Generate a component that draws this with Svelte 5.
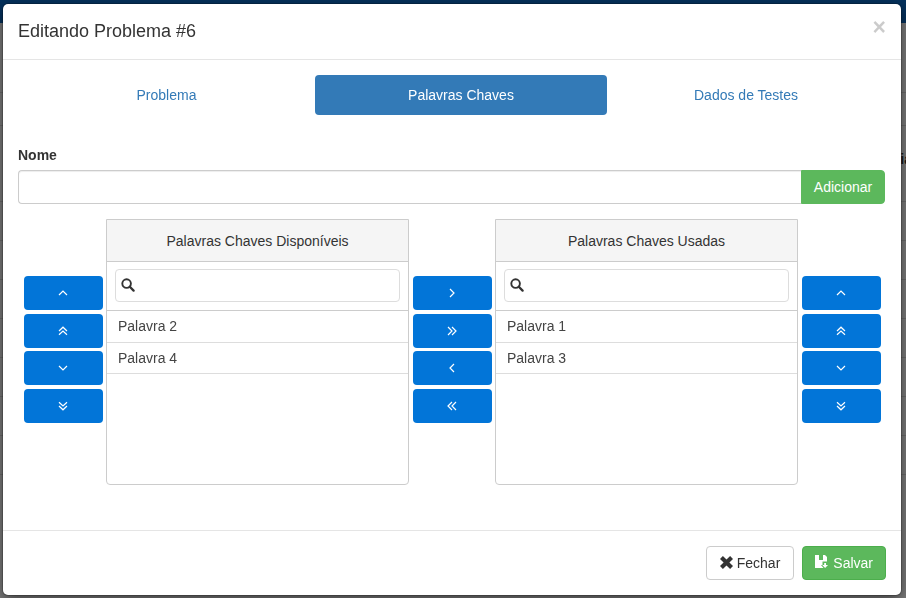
<script>
  const rowHeights = [70, 33, 53, 39, 39, 39, 39, 39, 39, 39];
  const chevrons = {
    up: ['M-4 2 L0 -2 L4 2'],
    dup: ['M-4 0 L0 -3.8 L4 0', 'M-4 3.8 L0 0 L4 3.8'],
    down: ['M-4 -2 L0 2 L4 -2'],
    ddown: ['M-4 -3.8 L0 0 L4 -3.8', 'M-4 0 L0 3.8 L4 0'],
    right: ['M-2 -4 L2 0 L-2 4'],
    dright: ['M-4 -4 L0 0 L-4 4', 'M0 -4 L4 0 L0 4'],
    left: ['M2 -4 L-2 0 L2 4'],
    dleft: ['M0 -4 L-4 0 L0 4', 'M4 -4 L0 0 L4 4']
  };
  const vertical = ['up', 'dup', 'down', 'ddown'];
  const horizontal = ['right', 'dright', 'left', 'dleft'];
  const lists = [
    { title: 'Palavras Chaves Disponíveis', items: ['Palavra 2', 'Palavra 4'] },
    { title: 'Palavras Chaves Usadas', items: ['Palavra 1', 'Palavra 3'] }
  ];
</script>

{#snippet stack(names, cls)}
  <div class="stack {cls}">
    {#each names as n}
      <button class="move" type="button" aria-label={n}>
        <svg width="14" height="14" viewBox="-7 -7 14 14">
          {#each chevrons[n] as d}
            <path {d} fill="none" stroke="#fff" stroke-width="1.2" />
          {/each}
        </svg>
      </button>
    {/each}
  </div>
{/snippet}

{#snippet panel(list)}
  <section class="panel">
    <header>{list.title}</header>
    <div class="search">
      <div class="searchbox">
        <svg width="14" height="14" viewBox="0 0 14 14">
          <circle cx="5.6" cy="5.6" r="4.3" fill="none" stroke="#333" stroke-width="1.9" />
          <path d="M8.8 8.8 L12.6 12.6" stroke="#333" stroke-width="2.3" stroke-linecap="round" />
        </svg>
      </div>
    </div>
    <ul>
      {#each list.items as item}
        <li>{item}</li>
      {/each}
    </ul>
  </section>
{/snippet}

<div class="page">
  <div class="nav"></div>
  {#each rowHeights as h, i}
    <div class="bgrow" style="height: {h}px">
      {#if i === 2}<b>ia</b>{/if}
    </div>
  {/each}
</div>

<div class="overlay"></div>

<div class="modal">
  <div class="mhead">
    <h4>Editando Problema #6</h4>
    <span class="close">×</span>
  </div>

  <div class="mbody">
    <nav class="pills">
      <a href="#p">Problema</a>
      <a href="#k" class="active">Palavras Chaves</a>
      <a href="#d">Dados de Testes</a>
    </nav>

    <label for="nome">Nome</label>
    <div class="group">
      <input id="nome" type="text" />
      <button class="add" type="button">Adicionar</button>
    </div>

    <div class="dual">
      {@render stack(vertical, 'c1')}
      {@render panel(lists[0])}
      {@render stack(horizontal, 'c2')}
      {@render panel(lists[1])}
      {@render stack(vertical, 'c3')}
    </div>
  </div>

  <div class="mfoot">
    <button class="btn plain" type="button">
      <svg width="15" height="15" viewBox="0 0 15 15">
        <path d="M1 3.9 L3.9 1 L7.5 4.6 L11.1 1 L14 3.9 L10.4 7.5 L14 11.1 L11.1 14 L7.5 10.4 L3.9 14 L1 11.1 L4.6 7.5 Z" fill="#333" />
      </svg>
      Fechar
    </button>
    <button class="btn ok" type="button">
      <svg width="14" height="14" viewBox="0 0 14 14">
        <path d="M0 0 H4 V5 H8 V0 H10 L12 2 V6.5 H7.5 V10 H6 L8.5 13 H0 Z" fill="#fff" />
        <path d="M9.2 8 H11 V10 H13 L10.1 13 L7.2 10 H9.2 Z" fill="#fff" />
      </svg>
      Salvar
    </button>
  </div>
</div>

<style>
  :global(body) {
    margin: 0;
    background: #fff;
    overflow: hidden;
    font-family: "Liberation Sans", Arial, sans-serif;
    font-size: 14px;
    line-height: 20px;
    color: #333;
  }
  .page {
    height: 598px;
    overflow: hidden;
  }
  .nav {
    height: 23px;
    background: #0a64bd;
  }
  .bgrow {
    box-sizing: border-box;
    border-bottom: 1px solid #ddd;
    text-align: right;
  }
  .bgrow b {
    display: block;
    margin-top: 23px;
    margin-right: -6px;
    font-size: 14px;
    line-height: 20px;
  }
  .overlay {
    position: fixed;
    inset: 0;
    background: rgba(0, 0, 0, 0.5);
  }
  .modal {
    position: absolute;
    left: 2px;
    top: 3px;
    width: 900px;
    height: 593px;
    box-sizing: border-box;
    background: #fff;
    border: 1px solid rgba(0, 0, 0, 0.2);
    background-clip: padding-box;
    border-radius: 6px;
    box-shadow: 0 5px 15px rgba(0, 0, 0, 0.5);
  }
  .mhead {
    height: 56px;
    box-sizing: border-box;
    padding: 15px;
    border-bottom: 1px solid #e5e5e5;
    position: relative;
  }
  h4 {
    margin: 0;
    font-size: 18px;
    font-weight: 500;
    line-height: 25px;
    color: #333;
  }
  .close {
    position: absolute;
    right: 15px;
    top: 12px;
    font-size: 23px;
    font-weight: 700;
    line-height: 23px;
    color: #000;
    opacity: 0.2;
  }
  .mbody {
    height: 470px;
    box-sizing: border-box;
    padding: 15px 16px 0 15px;
  }
  .pills {
    display: grid;
    grid-template-columns: 297px 292px 278px;
    height: 40px;
  }
  .pills a {
    display: block;
    text-align: center;
    line-height: 40px;
    color: #337ab7;
    text-decoration: none;
    border-radius: 4px;
  }
  .pills a.active {
    background: #337ab7;
    color: #fff;
  }
  label {
    display: block;
    margin-top: 30px;
    margin-bottom: 5px;
    font-weight: 700;
  }
  .group {
    display: flex;
    height: 34px;
  }
  input {
    flex: 1;
    min-width: 0;
    box-sizing: border-box;
    height: 34px;
    padding: 6px 12px;
    border: 1px solid #ccc;
    border-right: 0;
    border-radius: 4px 0 0 4px;
    box-shadow: inset 0 1px 1px rgba(0, 0, 0, 0.075);
    background: #fff;
  }
  .add {
    width: 84px;
    height: 34px;
    box-sizing: border-box;
    background: #5cb85c;
    border: 1px solid #5cb85c;
    border-radius: 0 4px 4px 0;
    color: #fff;
    font: inherit;
    padding: 0;
  }
  .dual {
    display: flex;
    margin-top: 15px;
    height: 266px;
  }
  .stack {
    display: flex;
    flex-direction: column;
    gap: 3.6px;
    box-sizing: border-box;
    padding-top: 57px;
  }
  .c1 { width: 88px; padding-left: 6px; }
  .c2 { width: 86px; padding-left: 4px; }
  .c3 { width: 87px; padding-left: 4px; }
  .move {
    width: 79px;
    height: 34px;
    flex: none;
    padding: 0 1px 0 0;
    display: flex;
    align-items: center;
    justify-content: center;
    background: #0275d8;
    border: 0;
    border-radius: 4px;
  }
  .move svg {
    display: block;
  }
  .panel {
    width: 303px;
    box-sizing: border-box;
    border: 1px solid #ccc;
    border-radius: 0 0 4px 4px;
    background: #fff;
  }
  .panel header {
    height: 42px;
    box-sizing: border-box;
    border-bottom: 1px solid #ccc;
    background: #f5f5f5;
    text-align: center;
    line-height: 42px;
  }
  .search {
    height: 49px;
    box-sizing: border-box;
    padding: 7px 8px 0;
    border-bottom: 1px solid #ccc;
  }
  .searchbox {
    height: 33px;
    box-sizing: border-box;
    border: 1px solid #ddd;
    border-radius: 4px;
    display: flex;
    align-items: center;
    padding-left: 5px;
  }
  .searchbox svg {
    display: block;
    margin-top: -2px;
  }
  ul {
    list-style: none;
    margin: 0;
    padding: 0;
  }
  li {
    height: 31.5px;
    box-sizing: border-box;
    padding: 5px 11px 0;
    border-bottom: 1px solid #ddd;
    color: #444;
  }
  .mfoot {
    height: 65px;
    box-sizing: border-box;
    padding: 15px;
    border-top: 1px solid #e5e5e5;
    display: flex;
    justify-content: flex-end;
    gap: 8px;
  }
  .btn {
    height: 34px;
    box-sizing: border-box;
    padding: 0 12px;
    display: flex;
    align-items: center;
    font: inherit;
    border-radius: 4px;
    border: 1px solid #ccc;
  }
  .btn svg {
    margin-top: -2px;
  }
  .btn.plain {
    gap: 3px;
    padding-right: 13px;
    background: #fff;
    color: #333;
  }
  .btn.ok {
    gap: 4px;
    background: #5cb85c;
    border-color: #4cae4c;
    color: #fff;
  }
</style>
